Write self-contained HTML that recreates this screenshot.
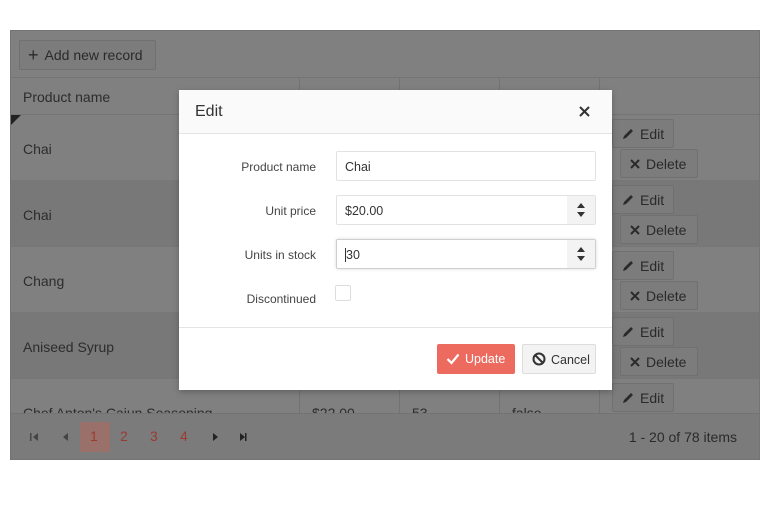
<!DOCTYPE html>
<html><head><style>
*{box-sizing:border-box;margin:0;padding:0}
body{width:770px;height:520px;background:#fff;font-family:"Liberation Sans",sans-serif;position:relative;overflow:hidden}
.g{position:absolute;left:10px;top:30px;width:750px;height:430px;background:#808080;border:1px solid #747474;overflow:hidden;color:#2c2c2c}
.abs{position:absolute}
.btn{position:absolute;border:1px solid #707070;background:#7c7c7c;border-radius:2px;font-size:14px;color:#2a2a2a;display:flex;align-items:center;padding-left:8px}
.btn svg{margin-right:5px}
.row{position:absolute;left:0;width:750px;height:66px;border-bottom:1px solid #777}
.cell{position:absolute;font-size:14px}
.vl{position:absolute;width:1px;background:#737373}
.dlg{position:absolute;left:179px;top:90px;width:433px;height:300px;background:#fff;box-shadow:0 2px 6px rgba(0,0,0,.25)}
.lbl{position:absolute;right:296px;font-size:12px;color:#444;text-align:right;width:120px}
.inp{position:absolute;left:157px;width:260px;height:30px;border:1px solid #e2e2e2;border-radius:2px;font-size:12.5px;color:#333;padding:8px 0 0 8px;background:#fff}
.sp{position:absolute;right:0;top:0;width:28px;height:28px;background:#f3f3f3}
</style></head><body>
<svg width="0" height="0" style="position:absolute"><defs>
<symbol id="pen" viewBox="0 0 14 14"><path d="M2 12 L3 9 L10 2 L12 4 L5 11 Z" fill="#2a2a2a"/></symbol>
<symbol id="x" viewBox="0 0 12 12"><path d="M2 2 L10 10 M10 2 L2 10" stroke="#2a2a2a" stroke-width="2"/></symbol>
<symbol id="ud" viewBox="0 0 28 28"><path d="M10 12 L14 7 L18 12 Z M10 16 L18 16 L14 21 Z" fill="#333"/></symbol>
</defs></svg>
<div class="g">
 <div class="btn" style="left:8px;top:9px;width:137px;height:30px"><span style="font-size:18px;margin-right:6px;line-height:14px">+</span>Add new record</div>
 <div class="abs" style="left:0;top:46px;width:750px;height:38px;border-top:1px solid #747474;border-bottom:1px solid #747474"></div>
 <div class="cell" style="left:12px;top:58px">Product name</div>
 <div class="row" style="top:84px;background:#808080"></div>
 <div class="row" style="top:150px;background:#787878"></div>
 <div class="row" style="top:216px;background:#808080"></div>
 <div class="row" style="top:282px;background:#787878"></div>
 <div class="row" style="top:348px;background:#808080"></div>
 <div class="vl" style="left:288px;top:47px;height:335px"></div>
 <div class="vl" style="left:388px;top:47px;height:335px"></div>
 <div class="vl" style="left:488px;top:47px;height:335px"></div>
 <div class="vl" style="left:588px;top:47px;height:335px"></div>
 <div class="abs" style="left:0;top:84px;width:0;height:0;border-top:10px solid #222;border-right:10px solid transparent"></div>
 <div class="cell" style="left:12px;top:110px">Chai</div>
 <div class="cell" style="left:12px;top:176px">Chai</div>
 <div class="cell" style="left:12px;top:242px">Chang</div>
 <div class="cell" style="left:12px;top:308px">Aniseed Syrup</div>
 <div class="cell" style="left:12px;top:374px">Chef Anton's Cajun Seasoning</div>
 <div class="cell" style="left:301px;top:374px">$22.00</div>
 <div class="cell" style="left:401px;top:374px">53</div>
 <div class="cell" style="left:501px;top:374px">false</div>
 <div class="btn" style="left:601px;top:88px;width:62px;height:29px"><svg width="14" height="14"><use href="#pen"/></svg>Edit</div>
 <div class="btn" style="left:609px;top:118px;width:78px;height:29px"><svg width="12" height="12"><use href="#x"/></svg>Delete</div>
 <div class="btn" style="left:601px;top:154px;width:62px;height:29px"><svg width="14" height="14"><use href="#pen"/></svg>Edit</div>
 <div class="btn" style="left:609px;top:184px;width:78px;height:29px"><svg width="12" height="12"><use href="#x"/></svg>Delete</div>
 <div class="btn" style="left:601px;top:220px;width:62px;height:29px"><svg width="14" height="14"><use href="#pen"/></svg>Edit</div>
 <div class="btn" style="left:609px;top:250px;width:78px;height:29px"><svg width="12" height="12"><use href="#x"/></svg>Delete</div>
 <div class="btn" style="left:601px;top:286px;width:62px;height:29px"><svg width="14" height="14"><use href="#pen"/></svg>Edit</div>
 <div class="btn" style="left:609px;top:316px;width:78px;height:29px"><svg width="12" height="12"><use href="#x"/></svg>Delete</div>
 <div class="btn" style="left:601px;top:352px;width:62px;height:29px"><svg width="14" height="14"><use href="#pen"/></svg>Edit</div>
 <div class="abs" style="left:0;top:382px;width:750px;height:48px;background:#7b7b7b;border-top:1px solid #737373"></div>
 <div class="abs" style="left:69px;top:391px;width:30px;height:30px;background:#9a706b"></div>
 <svg class="abs" style="left:0;top:382px" width="260" height="48">
  <path d="M19 20 h1.5 v8 h-1.5 Z M27 20 v8 l-5 -4 Z" fill="#444"/>
  <path d="M57 20 v8 l-5 -4 Z" fill="#444"/>
  <path d="M202 20 v8 l5 -4 Z" fill="#222"/>
  <path d="M229 20 v8 l5 -4 Z M234 20 h1.5 v8 h-1.5 Z" fill="#222"/>
 </svg>
 <div class="abs" style="left:79px;top:397px;font-size:14px;color:#9a3b31">1</div>
 <div class="abs" style="left:109px;top:397px;font-size:14px;color:#9a3b31">2</div>
 <div class="abs" style="left:139px;top:397px;font-size:14px;color:#9a3b31">3</div>
 <div class="abs" style="left:169px;top:397px;font-size:14px;color:#9a3b31">4</div>
 <div class="abs" style="right:22px;top:398px;font-size:14px;color:#2a2a2a">1 - 20 of 78 items</div>
</div>
<div class="dlg">
 <div class="abs" style="left:0;top:0;width:433px;height:44px;background:#fafafa;border-bottom:1px solid #e4e4e4"></div>
 <div class="abs" style="left:16px;top:13px;font-size:16px;color:#333">Edit</div>
 <svg class="abs" style="left:400px;top:16px" width="11" height="11"><path d="M1 1 L10 10 M10 1 L1 10" stroke="#333" stroke-width="2"/></svg>
 <div class="lbl" style="top:70px">Product name</div>
 <div class="inp" style="top:61px">Chai</div>
 <div class="lbl" style="top:114px">Unit price</div>
 <div class="inp" style="top:105px">$20.00<div class="sp"><svg width="28" height="28"><use href="#ud"/></svg></div></div>
 <div class="lbl" style="top:158px">Units in stock</div>
 <div class="inp" style="top:149px;border-color:#cfcfcf;box-shadow:0 0 3px rgba(0,0,0,.15)"><span style="border-left:1px solid #333">30</span><div class="sp"><svg width="28" height="28"><use href="#ud"/></svg></div></div>
 <div class="lbl" style="top:202px">Discontinued</div>
 <div class="abs" style="left:156px;top:195px;width:16px;height:16px;border:1px solid #ddd;border-radius:2px"></div>
 <div class="abs" style="left:0;top:237px;width:433px;height:1px;background:#e4e4e4"></div>
 <div class="abs" style="left:258px;top:254px;width:78px;height:30px;background:#ec6b5e;border-radius:2px;color:#fff;font-size:12.5px;padding:8px 0 0 28px">Update</div>
 <svg class="abs" style="left:267px;top:262px" width="14" height="14"><path d="M1.5 7 L5.5 11 L12.5 2.5" stroke="#fff" stroke-width="2.2" fill="none"/></svg>
 <div class="abs" style="left:343px;top:254px;width:74px;height:30px;background:#f3f3f3;border:1px solid #ddd;border-radius:2px;color:#333;font-size:12.5px;padding:8px 0 0 28px">Cancel</div>
 <svg class="abs" style="left:353px;top:262px" width="14" height="14"><circle cx="7" cy="7" r="5.5" stroke="#333" stroke-width="2" fill="none"/><path d="M3 3 L11 11" stroke="#333" stroke-width="2"/></svg>
</div>
</body></html>
